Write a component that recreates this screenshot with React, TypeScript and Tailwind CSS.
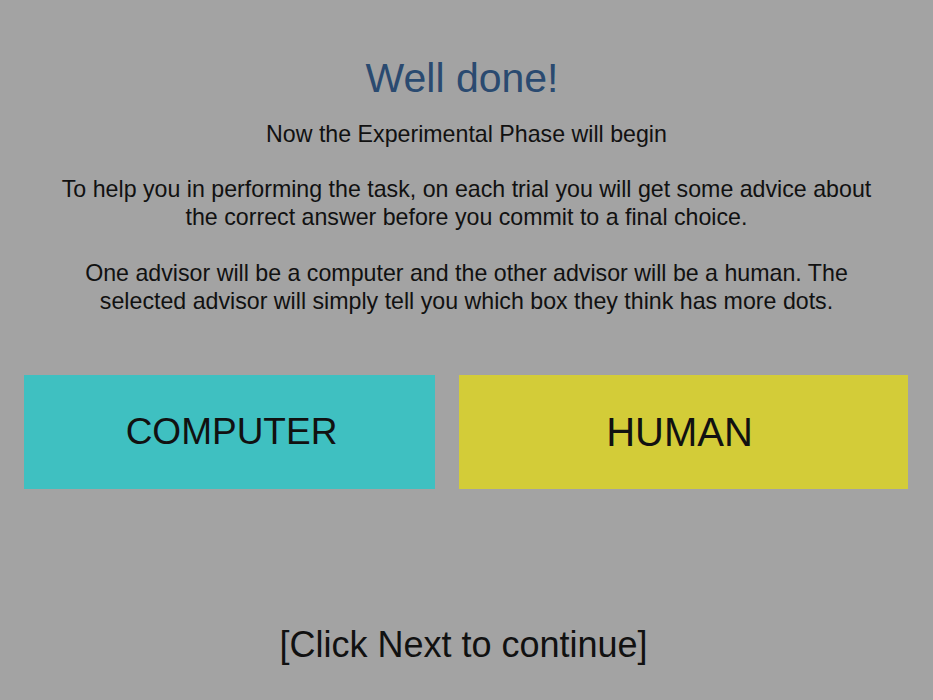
export default function App() {
  return (
    <div className="min-h-[700px] w-full bg-[#a3a3a3] text-[#111] flex flex-col items-center font-['Liberation_Sans',Arial,sans-serif]">
      <h1 className="mt-[54px] pr-[9px] text-[41px] leading-[48px] text-[#2a4a70]">Well done!</h1>
      <div className="mt-[18px] text-center text-[23.2px] leading-[28px]">
        <p>Now the Experimental Phase will begin</p>
        <p className="mt-[27px]">
          To help you in performing the task, on each trial you will get some advice about
          <br />
          the correct answer before you commit to a final choice.
        </p>
        <p className="mt-[28px]">
          One advisor will be a computer and the other advisor will be a human. The
          <br />
          selected advisor will simply tell you which box they think has more dots.
        </p>
      </div>
      <div className="mt-[60px] flex w-full pl-[24px] pr-[25px] gap-[24px]">
        <button className="w-[411px] h-[114px] pl-[4px] bg-[#3fc0c1] text-[37px]">COMPUTER</button>
        <button className="flex-1 h-[114px] pr-[8px] bg-[#d3cc38] text-[40px]">HUMAN</button>
      </div>
      <p className="mt-[134px] pr-[6px] text-[36px] leading-[44px]">[Click Next to continue]</p>
    </div>
  );
}
